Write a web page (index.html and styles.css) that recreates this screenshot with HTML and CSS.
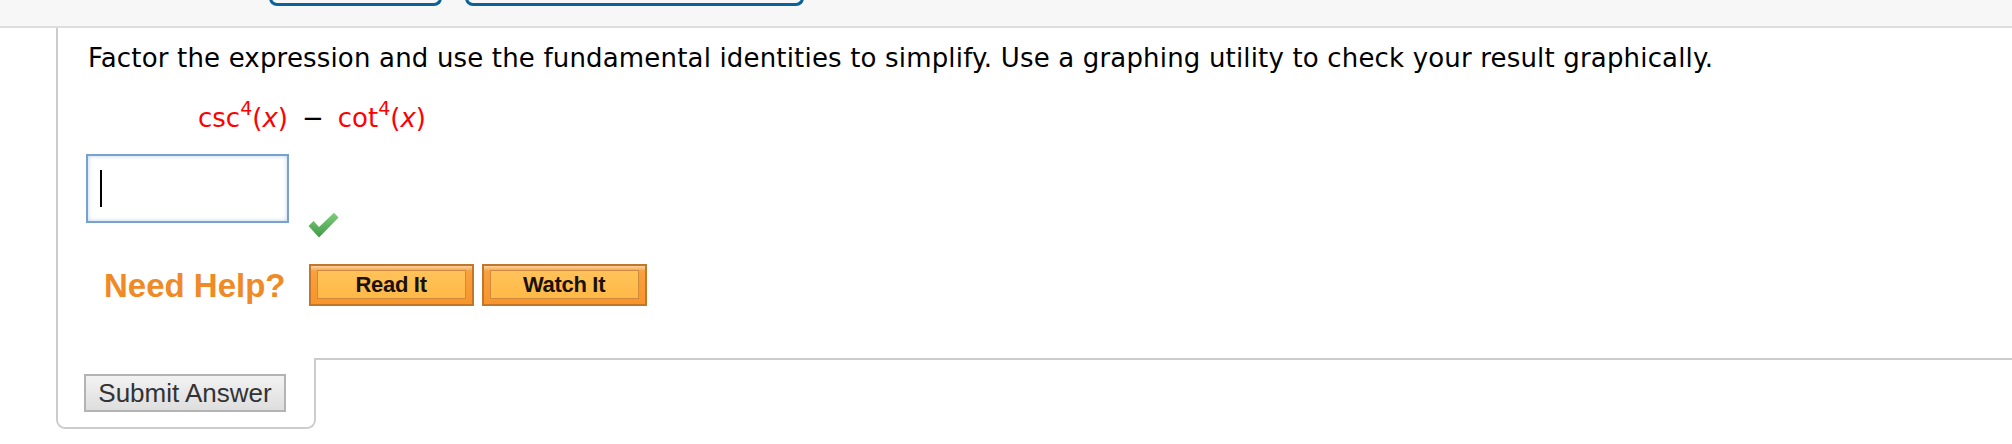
FILE: index.html
```html
<!DOCTYPE html>
<html>
<head>
<meta charset="utf-8">
<link rel="stylesheet" href="styles.css">
</head>
<body>
<div class="topbar">
  <div class="pill pill-a"></div>
  <div class="pill pill-b"></div>
</div>
<div class="panel">
  <p class="question">Factor the expression and use the fundamental identities to simplify. Use a graphing utility to check your result graphically.</p>
  <div class="math"><span class="red">csc<sup>4</sup>(<i>x</i>)</span><span class="minus">&minus;</span><span class="red">cot<sup>4</sup>(<i>x</i>)</span></div>
  <div class="answer-row">
    <div class="answer"><span class="caret"></span></div>
    <svg class="check" width="31" height="26" viewBox="0 0 31 26">
      <defs>
        <linearGradient id="g" x1="0" y1="0" x2="0" y2="1">
          <stop offset="0" stop-color="#7fcd7f"/>
          <stop offset="1" stop-color="#3f9a45"/>
        </linearGradient>
      </defs>
      <path d="M0.5 14 L5.5 9 L11 15 L26 0.8 L30.5 5.5 L11 25.5 Z" fill="url(#g)"/>
    </svg>
  </div>
  <div class="help-row">
    <span class="need-help">Need Help?</span>
    <button class="help-btn"><span class="help-inner">Read It</span></button>
    <button class="help-btn"><span class="help-inner">Watch It</span></button>
  </div>
</div>
<div class="footer">
  <div class="tab"><button class="submit">Submit Answer</button></div>
  <div class="rest"></div>
</div>
</body>
</html>
```
FILE: styles.css
```css
html, body {
  margin: 0;
  padding: 0;
  background: #ffffff;
}
body {
  width: 2012px;
  height: 444px;
  overflow: hidden;
  font-family: "DejaVu Sans", Verdana, sans-serif;
}
.topbar {
  height: 26px;
  background: #f7f7f7;
  border-bottom: 2px solid #dddddd;
  display: flex;
  align-items: flex-start;
  padding-left: 269px;
  gap: 23px;
  overflow: hidden;
}
.pill {
  height: 20px;
  margin-top: -14px;
  border: 3px solid #0a6298;
  border-top: none;
  border-radius: 0 0 8px 8px;
  box-sizing: border-box;
}
.pill-a { width: 173px; }
.pill-b { width: 339px; }

.panel {
  margin-left: 56px;
  border-left: 2px solid #cccccc;
  height: 330px;
  box-sizing: border-box;
  padding: 15px 0 0 30px;
}
.question {
  margin: 0;
  font-size: 26px;
  line-height: 30px;
  letter-spacing: 0.17px;
  color: #000000;
}
.math {
  margin-top: 30px;
  padding-left: 110px;
  font-size: 26px;
  line-height: 30px;
  height: 30px;
}
.math .red { color: #ff0000; }
.math sup {
  font-size: 19px;
  line-height: 0;
  vertical-align: 12px;
}
.math i { font-style: italic; }
.minus {
  color: #000000;
  padding: 0 14px;
}
.answer-row {
  margin-top: 21px;
  display: flex;
  align-items: flex-start;
  margin-left: -2px;
}
.answer {
  width: 203px;
  height: 69px;
  box-sizing: border-box;
  border: 2px solid #78a2cd;
  box-shadow: inset 0 0 4px #b7d2ee;
  background: #ffffff;
  padding: 14px 0 0 12px;
}
.caret {
  display: block;
  width: 2px;
  height: 37px;
  background: #000000;
}
.check {
  margin-left: 19px;
  margin-top: 58px;
}
.help-row {
  margin-top: 26px;
  display: flex;
  align-items: center;
  padding-left: 16px;
}
.need-help {
  font-family: "Liberation Sans", Arial, sans-serif;
  font-weight: bold;
  font-size: 33px;
  color: #f08a27;
  margin-right: 23px;
  margin-top: 1px;
}
.help-btn {
  width: 165px;
  height: 42px;
  box-sizing: border-box;
  border: 2px solid #c0772c;
  background: linear-gradient(#fcd3a2 0, #f9a040 5px, #f7952a 100%);
  padding: 4px 6px 5px 6px;
  margin: 0 8px 0 0;
  display: flex;
  cursor: pointer;
}
.help-inner {
  flex: 1;
  display: flex;
  align-items: center;
  justify-content: center;
  border: 1px solid #cf8a3c;
  background: linear-gradient(#ffc35a, #ffb947);
  font-family: "Liberation Sans", Arial, sans-serif;
  font-weight: bold;
  font-size: 22px;
  letter-spacing: -0.3px;
  color: #1a1208;
}
.footer {
  display: flex;
  margin-left: 56px;
}
.tab {
  width: 260px;
  height: 71px;
  box-sizing: border-box;
  border: 2px solid #cccccc;
  border-top: none;
  border-radius: 0 0 9px 9px;
  padding: 16px 0 0 26px;
}
.rest {
  flex: 1;
  border-top: 2px solid #cccccc;
}
.submit {
  width: 202px;
  height: 38px;
  box-sizing: border-box;
  border: 2px solid #b3b3b3;
  background: linear-gradient(#f2f2f2, #dedede);
  font-family: "Liberation Sans", Arial, sans-serif;
  font-size: 26px;
  color: #333333;
  padding: 0;
  margin: 0;
  line-height: 34px;
}
```
